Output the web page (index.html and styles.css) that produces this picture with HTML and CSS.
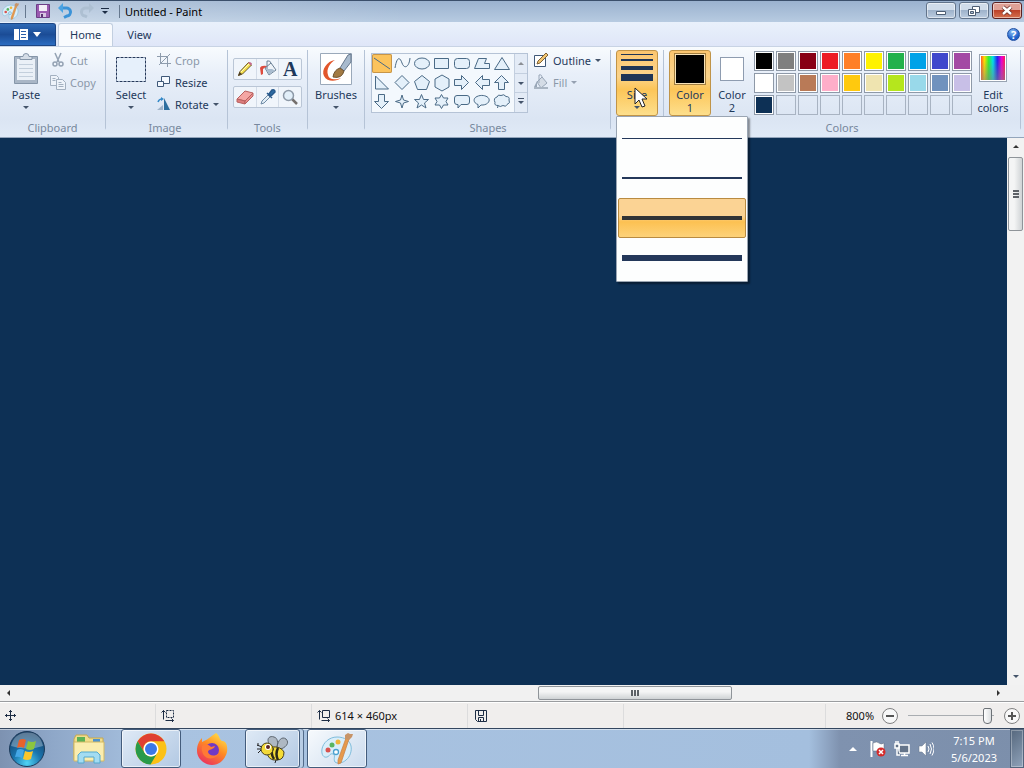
FILE: index.html
```html
<!DOCTYPE html>
<html lang="en">
<head>
    <meta charset="UTF-8">
    <meta name="viewport" content="width=device-width, initial-scale=1.0">
    <title>Untitled - Paint</title>
    <link rel="stylesheet" href="styles.css">
</head>
<body>
    <!-- Shared icon paths -->
    <svg class="defs" width="0" height="0" aria-hidden="true">
        <defs>
            <symbol id="palette" viewBox="0 0 32 32">
                <path d="M16 4C8 4 2 10 1 16c-1 6 2 9 5 8 3-1 3-4 6-3 3 1 0 5 2 8 2 2 8 1 11-2 4-3 6-9 5-14C29 8 24 4 16 4z" fill="#d9eefa" stroke="#7fbcdb"/>
                <circle cx="7" cy="17" r="2.5" fill="#d9534f"/>
                <circle cx="11" cy="12" r="2.5" fill="#57b560"/>
                <circle cx="17" cy="9" r="2.5" fill="#f0b53a"/>
                <circle cx="15" cy="19" r="2.5" fill="#fff" stroke="#4aa0cf" stroke-width="1.3"/>
                <path d="M28 6l-8 24-3 1 0-4 8-22z" fill="#e69a4c" stroke="#c67f45" stroke-width=".7"/>
                <path d="M24 2l3-2 2 1 3 0-1 3-3 3-4-1z" fill="#c79468"/>
            </symbol>
            <symbol id="pencil" viewBox="0 0 16 16">
                <path d="M1.500 14.500l1.500-4 8.500-9 3 2.500-9 9z" fill="#f5e04d" stroke="#6b5a2a"/>
                <path d="M11 2l3 2.500 1-1.500c0-1-1.500-2-2.500-2z" fill="#c46b8d"/>
                <path d="M1 15l1.500-4 2.500 2z" fill="#4b3b23"/>
                <path d="M4 11l8-8" stroke="#fffbc0"/>
            </symbol>
            <symbol id="bucket" viewBox="0 0 18 18">
                <path d="M6 8l6-5 5 7-7 5z" fill="#eef3f8" stroke="#6a7f94"/>
                <path d="M7 9l6 0 3 1.500-6 4z" fill="#a9bccf"/>
                <path d="M8 1v8M8 1q3-1 4 2" fill="none" stroke="#6a7f94"/>
            </symbol>
            <symbol id="resize-mark" viewBox="0 0 14 13">
                <path d="M2.500 10.500v-9M.5 3.500l2-2 2 2M4.500 11.500h8M10.500 9.500l2 2-2 2" fill="none" stroke="#1c2c44"/>
            </symbol>
        </defs>
    </svg>

    <!-- Title bar -->
    <header class="titlebar">
        <div class="quick-access">
            <svg class="app-icon" width="17" height="17"><use href="#palette"/></svg>
            <span class="rule"></span>
            <button type="button" aria-label="Save">
                <svg width="16" height="16" viewBox="0 0 16 16"><path d="M1.500 1.500h13v13h-13z" fill="#9a5ab0" stroke="#6d3f87"/><path d="M4 2h8v6H4z" fill="#f3eef8"/><path d="M5 10h6v4H5z" fill="#d7c6e2"/><path d="M6 11h2v3H6z" fill="#5a3474"/></svg>
            </button>
            <button type="button" aria-label="Undo">
                <svg width="16" height="16" viewBox="0 0 16 16"><path d="M4 5h5a4 4 0 0 1 1 8l-3 1.500" fill="none" stroke="#3b93d8" stroke-width="3"/><path d="M1 5l5-5v10z" fill="#4ba3e3"/></svg>
            </button>
            <button type="button" aria-label="Redo" disabled>
                <svg width="16" height="16" viewBox="0 0 16 16"><path d="M12 5H7a4 4 0 0 0-1 8l2 1" fill="none" stroke="#adbfd2" stroke-width="3"/><path d="M15 5l-5-5v10z" fill="#adbfd2"/></svg>
            </button>
            <button type="button" aria-label="Customize Quick Access Toolbar">
                <svg width="8" height="8" viewBox="0 0 8 8"><path d="M0 1.500h8" stroke="#1c2c44"/><path d="M1 4h6L4 7z" fill="#1c2c44"/></svg>
            </button>
            <span class="rule"></span>
        </div>
        <h1>Untitled - Paint</h1>
        <div class="window-buttons">
            <button type="button" aria-label="Minimize">
                <svg width="12" height="12" viewBox="0 0 12 12"><path d="M1.500 6.500h9v3h-9z" fill="#fff" stroke="#4c5d73"/></svg>
            </button>
            <button type="button" aria-label="Restore">
                <svg width="12" height="12" viewBox="0 0 12 12"><path d="M4.500 1.500h7v6h-7z" fill="#fff" stroke="#4c5d73"/><path d="M.5 4.500h7v6h-7z" fill="#fff" stroke="#4c5d73"/><path d="M2.500 6.500h3v2h-3z" fill="#a9bcd2" stroke="#4c5d73"/></svg>
            </button>
            <button type="button" class="close" aria-label="Close">
                <svg width="12" height="12" viewBox="0 0 12 12"><path d="M2 2l8 7M10 2L2 9" stroke="#6b2c26" stroke-width="4"/><path d="M2 2l8 7M10 2L2 9" stroke="#fff" stroke-width="2.400"/></svg>
            </button>
        </div>
    </header>

    <!-- Tabs -->
    <nav class="tabs">
        <button type="button" class="file-tab" aria-label="Paint menu">
            <svg width="14" height="11" viewBox="0 0 14 11"><path d="M0 0h14v11H0z" fill="#fff"/><path d="M5.500 0v11" stroke="#2a5ea8"/><path d="M7 2.500h5M7 5.500h5M7 8.500h5" stroke="#2a5ea8"/></svg>
            <svg width="8" height="5" viewBox="0 0 8 5"><path d="M0 0h8L4 5z" fill="#fff"/></svg>
        </button>
        <a href="#home" class="tab active">Home</a>
        <a href="#view" class="tab">View</a>
        <button type="button" class="help" aria-label="Help">?</button>
    </nav>

    <!-- Ribbon -->
    <section class="ribbon" id="home">
        <div class="group clipboard">
            <div class="tools">
                <button type="button" class="big">
                    <svg width="26" height="32" viewBox="0 0 26 32"><path d="M1.500 3.500h23v27h-23z" fill="#a9b6c6" stroke="#8696a9"/><path d="M4 6h18v21H4z" fill="#eaf0f7"/><path d="M6 11.500h14M6 15.500h14M6 19.500h14M6 23.500h14" stroke="#c3cfdc"/><path d="M7 6.500V3.500h3a3 3 0 0 1 6 0h3v3z" fill="#d5dde7" stroke="#8696a9"/></svg>
                    <span>Paste</span>
                    <i class="arrow"></i>
                </button>
                <div class="stack">
                    <button type="button" class="row" disabled>
                        <svg width="16" height="16" viewBox="0 0 16 16" fill="none" stroke="#94a2b3" stroke-width="1.500"><path d="M5 1l4 9M11 1L7 10"/><circle cx="5" cy="12" r="2"/><circle cx="11" cy="12" r="2"/></svg>
                        Cut
                    </button>
                    <button type="button" class="row" disabled>
                        <svg width="16" height="16" viewBox="0 0 16 16" fill="#eef3fa" stroke="#a3b0c0"><path d="M.5 1.500h6l2 2v8h-8z"/><path d="M6.500 5.500h6l3 3v7h-9z"/><path d="M8.500 8.500h3M8.500 10.500h5M8.500 12.500h5M2.500 4.500h3M2.500 6.500h3"/></svg>
                        Copy
                    </button>
                </div>
            </div>
            <h2>Clipboard</h2>
        </div>

        <div class="group image">
            <div class="tools">
                <button type="button" class="big">
                    <svg width="32" height="32" viewBox="0 0 32 32"><path d="M1.500 4.500h29v24h-29z" fill="#e6f0fb" stroke="#26395a" stroke-dasharray="3 1"/></svg>
                    <span>Select</span>
                    <i class="arrow"></i>
                </button>
                <div class="stack">
                    <button type="button" class="row" disabled>
                        <svg width="14" height="14" viewBox="0 0 14 14" fill="none" stroke="#8e9cad"><path d="M3.500 0v10.500H14M0 3.500h10.500V14M2 12L13 1"/></svg>
                        Crop
                    </button>
                    <button type="button" class="row">
                        <svg width="14" height="14" viewBox="0 0 14 14" fill="#f4f9ff" stroke="#3f5878"><path d="M4.500 1.500h8v7h-8z"/><path d="M.5 6.500h6v5h-6z"/></svg>
                        Resize
                    </button>
                    <button type="button" class="row">
                        <svg width="14" height="14" viewBox="0 0 14 14"><path d="M7 1v12h6z" fill="#2e6f9f"/><path d="M6 8v5H0z" fill="#9fb3c8"/><path d="M1 5q1-3 4-3" fill="none" stroke="#3489c8" stroke-width="1.500"/><path d="M4 0l3 2-3 2z" fill="#3489c8"/></svg>
                        Rotate
                        <i class="arrow"></i>
                    </button>
                </div>
            </div>
            <h2>Image</h2>
        </div>

        <div class="group toolbox">
            <div class="tools">
                <div class="tool-row">
                    <button type="button" aria-label="Pencil"><svg width="16" height="16"><use href="#pencil"/></svg></button>
                    <button type="button" aria-label="Fill with color"><svg width="18" height="18" viewBox="0 0 18 18"><use href="#bucket"/><path d="M8 6Q2 5 1 8l1 7 2-1V9z" fill="#dd4b3e"/></svg></button>
                    <button type="button" class="letter" aria-label="Text">A</button>
                </div>
                <div class="tool-row">
                    <button type="button" aria-label="Eraser"><svg width="18" height="16" viewBox="0 0 18 16"><path d="M1 10l8-8 8 2-8 8z" fill="#f4a6a4" stroke="#b8605f"/><path d="M1 10l8 2v3l-8-2z" fill="#dd7d7c" stroke="#b8605f"/><path d="M9 12l8-8v3l-8 8z" fill="#e88d8b" stroke="#b8605f"/></svg></button>
                    <button type="button" aria-label="Color picker"><svg width="16" height="16" viewBox="0 0 16 16"><path d="M1 15l1-3 6-6 2 2-6 6z" fill="#e1edf6" stroke="#6f8ba5"/><path d="M7 4l5 5M9 5l3-4q3-1 3 2l-4 4z" fill="#2d6ca4" stroke="#27598c" stroke-width="1.500"/></svg></button>
                    <button type="button" aria-label="Magnifier"><svg width="16" height="16" viewBox="0 0 16 16"><path d="M10 10l5 5" stroke="#75706d" stroke-width="2.500"/><circle cx="6.500" cy="6.500" r="5" fill="#e2eff9" stroke="#8d99a7" stroke-width="1.500"/></svg></button>
                </div>
            </div>
            <h2>Tools</h2>
        </div>

        <div class="group brushes">
            <div class="tools">
                <button type="button" class="big">
                    <svg width="32" height="32" viewBox="0 0 32 32"><path d="M.5.5h31v31H.5z" fill="#fff" stroke="#9aa9ba"/><path d="M15 7C7 8 1 17 4 23c3 6 12 6 17 2-5 2-12 2-13-3C6 16 10 10 15 7z" fill="#e2562b"/><path d="M20 15L28 2l3-1v8l-7 9z" fill="#a9bbce" stroke="#66788d"/><path d="M13 24q1-7 7-9l4 3q-2 8-11 6z" fill="#a27a43" stroke="#6e5330"/></svg>
                    <span>Brushes</span>
                    <i class="arrow"></i>
                </button>
            </div>
        </div>

        <div class="group shapes">
            <div class="tools">
                <div class="gallery">
                    <div class="shape-grid">
                        <button type="button" class="selected" aria-label="Line"><svg viewBox="0 0 20 19"><path d="M2 4l16 11"/></svg></button>
                        <button type="button" aria-label="Curve"><svg viewBox="0 0 20 19"><path d="M3 14C5 2 8 3 10 9s7 5 8-5"/></svg></button>
                        <button type="button" aria-label="Oval"><svg viewBox="0 0 20 19"><ellipse cx="10" cy="9.500" rx="7.500" ry="5.500"/></svg></button>
                        <button type="button" aria-label="Rectangle"><svg viewBox="0 0 20 19"><path d="M2.500 4.500h14v10h-14z"/></svg></button>
                        <button type="button" aria-label="Rounded rectangle"><svg viewBox="0 0 20 19"><rect x="2.500" y="4.500" width="15" height="10" rx="3"/></svg></button>
                        <button type="button" aria-label="Polygon"><svg viewBox="0 0 20 19"><path d="M2.500 14.500l4-10h8l-2 5h5v5z"/></svg></button>
                        <button type="button" aria-label="Triangle"><svg viewBox="0 0 20 19"><path d="M10 3.500l7.500 12h-15z"/></svg></button>
                        <button type="button" aria-label="Right triangle"><svg viewBox="0 0 20 19"><path d="M3.500 3v13h13z"/></svg></button>
                        <button type="button" aria-label="Diamond"><svg viewBox="0 0 20 19"><path d="M10 2.500l7 7-7 7-7-7z"/></svg></button>
                        <button type="button" aria-label="Pentagon"><svg viewBox="0 0 20 19"><path d="M10 2.500l7.500 6-3 8h-9l-3-8z"/></svg></button>
                        <button type="button" aria-label="Hexagon"><svg viewBox="0 0 20 19"><path d="M10 2l7 4v8l-7 4-7-4V6z"/></svg></button>
                        <button type="button" aria-label="Right arrow"><svg viewBox="0 0 20 19"><path d="M2.500 6.500h7v-4l7 7-7 7v-4h-7z"/></svg></button>
                        <button type="button" aria-label="Left arrow"><svg viewBox="0 0 20 19"><path d="M17.500 6.500h-7v-4l-7 7 7 7v-4h7z"/></svg></button>
                        <button type="button" aria-label="Up arrow"><svg viewBox="0 0 20 19"><path d="M6.500 16.500v-7h-4l7-7 7 7h-4v7z"/></svg></button>
                        <button type="button" aria-label="Down arrow"><svg viewBox="0 0 20 19"><path d="M6.500 2.500v7h-4l7 7 7-7h-4v-7z"/></svg></button>
                        <button type="button" aria-label="Four-point star"><svg viewBox="0 0 20 19"><path d="M10 3l1.500 5 5 1.500-5 1.500-1.500 5L8.500 11l-5-1.500 5-1.500z"/></svg></button>
                        <button type="button" aria-label="Five-point star"><svg viewBox="0 0 20 19"><path d="M9.500 2.500l2 5h5l-4 3.500 1.500 5-4.500-3L5 16l1.500-5-4-3.500h5z"/></svg></button>
                        <button type="button" aria-label="Six-point star"><svg viewBox="0 0 20 19"><path d="M9.500 2.500l2 3.500h4.500l-2 3.500 2 3.500h-4.500l-2 3.500-2-3.500H3l2-3.500L3 6h4.500z"/></svg></button>
                        <button type="button" aria-label="Rounded callout"><svg viewBox="0 0 20 19"><path d="M5 3.500h10q2.500 0 2.500 2.500v4q0 2.500-2.500 2.500H9L6 16v-3.500H5q-2.500 0-2.500-2.500V6q0-2.500 2.500-2.500z"/></svg></button>
                        <button type="button" aria-label="Oval callout"><svg viewBox="0 0 20 19"><path d="M6 16l0-3.500C1 11 1 6 5 4.500c4-2 9-1 11 1 3 3 0 7-5 7.500H9z"/></svg></button>
                        <button type="button" aria-label="Cloud callout"><svg viewBox="0 0 20 19"><path d="M6 14l-.5 2M5 5q1-3 4-1.500 3-2 5 1 4 0 3 3.500 2 3-2 4.500-1 3-4 1-3 2-5 0-4 0-3-3Q1 6 5 5z"/></svg></button>
                    </div>
                    <div class="gallery-nav">
                        <button type="button" aria-label="Scroll up" disabled><i class="arrow up"></i></button>
                        <button type="button" aria-label="Scroll down"><i class="arrow"></i></button>
                        <button type="button" class="more" aria-label="More shapes"><i class="arrow"></i></button>
                    </div>
                </div>
                <div class="stack">
                    <button type="button" class="row">
                        <svg width="16" height="16" viewBox="0 0 16 16"><path d="M1.500 3.500h11v11h-11z" fill="#fff" stroke="#3f5878"/><path d="M4 12l1-3 8-8 2 2-8 8z" fill="#f0c471" stroke="#7d6035"/></svg>
                        Outline
                        <i class="arrow"></i>
                    </button>
                    <button type="button" class="row" disabled>
                        <svg width="16" height="16" viewBox="0 0 16 16"><path d="M4 8l5-5 5 6-6 5z" fill="#d4dce6" stroke="#98a6b7"/><path d="M6 9V1q3-1 3 3" fill="none" stroke="#98a6b7"/><path d="M4 7l-3 6h3z" fill="#98a6b7"/><path d="M1 13h14v2H1z" fill="#a9b5c3"/></svg>
                        Fill
                        <i class="arrow"></i>
                    </button>
                </div>
            </div>
            <h2>Shapes</h2>
        </div>

        <div class="group size">
            <div class="tools">
                <button type="button" class="big pressed" aria-haspopup="true" aria-expanded="true">
                    <svg width="32" height="32" viewBox="0 0 32 32"><path d="M0 1h32v1H0zM0 6h32v2H0zM0 13h32v4H0zM0 21h32v7H0z" fill="#1f3556"/></svg>
                    <span>Size</span>
                    <i class="arrow"></i>
                </button>
                <svg class="cursor" width="13" height="21" viewBox="0 0 13 21"><path d="M1 1v16l4-4 3 7 3-1-3-7h5z" fill="#fff" stroke="#222"/></svg>
                <div class="size-menu" role="menu">
                    <button type="button" role="menuitem" class="px1" aria-label="1px"><i></i></button>
                    <button type="button" role="menuitem" class="px3" aria-label="3px"><i></i></button>
                    <button type="button" role="menuitem" class="px5 hover" aria-label="5px"><i></i></button>
                    <button type="button" role="menuitem" class="px8" aria-label="8px"><i></i></button>
                </div>
            </div>
        </div>

        <div class="group colors">
            <div class="tools">
                <button type="button" class="big pressed"><b class="current one"></b><span>Color<br>1</span></button>
                <button type="button" class="big"><b class="current two"></b><span>Color<br>2</span></button>
                <div class="swatches">
                    <button type="button" class="black" aria-label="Black"></button>
                    <button type="button" class="gray" aria-label="Gray-50%"></button>
                    <button type="button" class="dark-red" aria-label="Dark red"></button>
                    <button type="button" class="red" aria-label="Red"></button>
                    <button type="button" class="orange" aria-label="Orange"></button>
                    <button type="button" class="yellow" aria-label="Yellow"></button>
                    <button type="button" class="green" aria-label="Green"></button>
                    <button type="button" class="turquoise" aria-label="Turquoise"></button>
                    <button type="button" class="indigo" aria-label="Indigo"></button>
                    <button type="button" class="purple" aria-label="Purple"></button>
                    <button type="button" class="white" aria-label="White"></button>
                    <button type="button" class="light-gray" aria-label="Gray-25%"></button>
                    <button type="button" class="brown" aria-label="Brown"></button>
                    <button type="button" class="rose" aria-label="Rose"></button>
                    <button type="button" class="gold" aria-label="Gold"></button>
                    <button type="button" class="light-yellow" aria-label="Light yellow"></button>
                    <button type="button" class="lime" aria-label="Lime"></button>
                    <button type="button" class="light-turquoise" aria-label="Light turquoise"></button>
                    <button type="button" class="blue-gray" aria-label="Blue-gray"></button>
                    <button type="button" class="lavender" aria-label="Lavender"></button>
                    <button type="button" class="navy" aria-label="Custom color"></button>
                    <button type="button" class="empty" aria-label="Empty"></button>
                    <button type="button" class="empty" aria-label="Empty"></button>
                    <button type="button" class="empty" aria-label="Empty"></button>
                    <button type="button" class="empty" aria-label="Empty"></button>
                    <button type="button" class="empty" aria-label="Empty"></button>
                    <button type="button" class="empty" aria-label="Empty"></button>
                    <button type="button" class="empty" aria-label="Empty"></button>
                    <button type="button" class="empty" aria-label="Empty"></button>
                    <button type="button" class="empty" aria-label="Empty"></button>
                </div>
                <button type="button" class="big edit"><b class="spectrum"></b><span>Edit<br>colors</span></button>
            </div>
            <h2>Colors</h2>
        </div>
    </section>

    <!-- Drawing area -->
    <main class="workspace">
        <div class="canvas"></div>
        <div class="vscroll">
            <button type="button" aria-label="Scroll up"><i class="arrow up"></i></button>
            <div class="vtrack"><div class="thumb"><i></i></div></div>
            <button type="button" aria-label="Scroll down"><i class="arrow"></i></button>
        </div>
    </main>
    <div class="hscroll">
        <button type="button" aria-label="Scroll left"><i class="arrow left"></i></button>
        <div class="htrack"><div class="thumb"><i></i></div></div>
        <button type="button" aria-label="Scroll right"><i class="arrow right"></i></button>
    </div>

    <!-- Status bar -->
    <footer class="statusbar">
        <div class="cell"><svg width="11" height="11" viewBox="0 0 11 11" fill="none" stroke="#1c2c44"><path d="M5.500 0v11M0 5.500h11M4 2l1.500-1.500L7 2M4 9l1.500 1.500L7 9M2 4L.5 5.500 2 7M9 4l1.500 1.500L9 7"/></svg></div>
        <div class="cell"><svg width="14" height="14" viewBox="0 0 14 14"><use href="#resize-mark" width="14" height="13"/><path d="M5.500 1.500h7v7h-7z" fill="none" stroke="#1c2c44" stroke-dasharray="2 1"/></svg></div>
        <div class="cell"><svg width="14" height="14" viewBox="0 0 14 14"><use href="#resize-mark" width="14" height="13"/><path d="M5.500 1.500h7v7h-7z" fill="none" stroke="#1c2c44"/></svg><span>614 × 460px</span></div>
        <div class="cell disk"><svg width="12" height="12" viewBox="0 0 12 12" fill="none" stroke="#1c2c44"><path d="M.5.5h11v11h-9l-2-2zM3.500.5v5h5v-5M3.500 11.500v-4h5v4M5.500 9v2"/></svg></div>
        <div class="cell rest"></div>
        <div class="zoom">
            <label for="zoom">800%</label>
            <button type="button" aria-label="Zoom out"><svg width="16" height="16" viewBox="0 0 16 16"><circle cx="8" cy="8" r="7.500" fill="#f8f8f8" stroke="#808080"/><path d="M4 8h8" stroke="#555" stroke-width="2"/></svg></button>
            <input type="range" id="zoom" min="0" max="100" value="98">
            <button type="button" aria-label="Zoom in"><svg width="16" height="16" viewBox="0 0 16 16"><circle cx="8" cy="8" r="7.500" fill="#f8f8f8" stroke="#808080"/><path d="M4 8h8M8 4v8" stroke="#555" stroke-width="2"/></svg></button>
        </div>
    </footer>

    <!-- Taskbar -->
    <div class="taskbar">
        <button type="button" class="start" aria-label="Start">
            <svg width="38" height="38" viewBox="0 0 38 38">
                <defs>
                    <radialGradient id="orb" cx=".5" cy=".9" r=".9"><stop offset="0" stop-color="#4fd4f5"/><stop offset=".45" stop-color="#1a74ad"/><stop offset="1" stop-color="#173c63"/></radialGradient>
                </defs>
                <circle cx="19" cy="19" r="17.500" fill="url(#orb)" stroke="#1c3a5a"/>
                <path d="M3 16Q6 3 19 2.500T35 16Q19 21 3 16z" fill="#fff" opacity=".3"/>
                <path d="M11 10q4-2 7 0l-2 8q-4-2-7 0z" fill="#e8622c"/>
                <path d="M20 11q4 2 8 0l-2 8q-4 2-8 0z" fill="#8cc63e"/>
                <path d="M9 20q3-2 7 0l-2 8q-4-2-7-1z" fill="#45a7e6"/>
                <path d="M17 21q4 2 8 0l-2 8q-4 2-8 0z" fill="#fbc62c"/>
            </svg>
        </button>
        <button type="button" class="task" aria-label="Windows Explorer">
            <svg width="32" height="30" viewBox="0 0 32 30"><path d="M1 5l2-4h11l2 3h14v22H1z" fill="#f0dc8b" stroke="#c4a850"/><path d="M4 3h8v5H4z" fill="#5bb157"/><path d="M20 5h7v3h-7z" fill="#4e93cf"/><path d="M1 8h30v19H1z" fill="#faedb0" stroke="#d3b962"/><path d="M5 29v-8l3-3h16l3 3v8h-6v-6H11v6z" fill="#a3dcf2" stroke="#55a9ce"/></svg>
        </button>
        <button type="button" class="task open" aria-label="Google Chrome">
            <svg width="32" height="32" viewBox="0 0 32 32"><circle cx="16" cy="16" r="15.500" fill="#fbc116"/><path d="M2.600 8.300A15.500 15.500 0 0 1 29.400 8.300H16a7.500 7.500 0 0 0-6.500 11.500z" fill="#df4032"/><path d="M2.600 8.300A15.500 15.500 0 0 0 15.500 31.500L22.500 19.800A7.500 7.500 0 0 1 9.500 19.800z" fill="#289a4a"/><circle cx="16" cy="16" r="7.500" fill="#fff"/><circle cx="16" cy="16" r="6" fill="#3b78e7"/></svg>
        </button>
        <button type="button" class="task" aria-label="Firefox">
            <svg width="32" height="32" viewBox="0 0 32 32">
                <defs>
                    <linearGradient id="fox" x1=".8" y1="0" x2=".2" y2="1"><stop offset="0" stop-color="#ffe44c"/><stop offset=".45" stop-color="#ff8a23"/><stop offset="1" stop-color="#ea2b62"/></linearGradient>
                </defs>
                <path d="M20 0c4 3 3 6 6 8 4-1 6 5 5 11-2 8-8 13-15 13S1 26 1 18C1 12 3 8 6 5v4l4-2c1 0 4-3 10-7z" fill="url(#fox)"/>
                <circle cx="16" cy="17" r="7" fill="#7139c4"/>
                <path d="M6 13c4-3 7-1 9 1l4-1c-1 4-7 3-7 6 1 4 7 5 11 1-2 6-12 8-16 1q-2-4-1-8z" fill="#ff7a35"/>
            </svg>
        </button>
        <button type="button" class="task open stacked" aria-label="Bee">
            <svg width="34" height="28" viewBox="0 0 34 28"><path d="M15 11C9 5 13 0 18 2c4 1 4 6 3 10 1-7 5-11 9-8 4 4 0 9-8 11z" fill="#aeb8c3" stroke="#5d6670"/><path d="M15 12q10-1 13 5 0 8-7 8-9 1-10-8z" fill="#f5dc36" stroke="#4b421c"/><path d="M17 13q-3 5 1 11M22 13q-3 6 0 12" fill="none" stroke="#2d2818" stroke-width="2.500"/><circle cx="11" cy="14" r="6" fill="#f3d938" stroke="#4b421c"/><circle cx="12" cy="12" r="3" fill="#fff"/><circle cx="12" cy="12" r="2" fill="#5f2520"/><path d="M6 12L1 10m4 4H1m1-6v3m3 4l-3 3M20 25l-1 3" stroke="#222"/></svg>
        </button>
        <button type="button" class="task open current-app" aria-label="Paint">
            <svg width="32" height="32"><use href="#palette"/></svg>
        </button>
        <div class="tray">
            <button type="button" aria-label="Show hidden icons"><svg width="8" height="5" viewBox="0 0 8 5"><path d="M0 5l4-4 4 4z" fill="#fff"/></svg></button>
            <button type="button" aria-label="Action Center"><svg width="16" height="16" viewBox="0 0 16 16"><path d="M1.500 0v16" stroke="#fff" stroke-width="2"/><path d="M3 2q4-2 6 0t5 0v8H3z" fill="#fff" stroke="#5f6b7c" stroke-width=".5"/><circle cx="11" cy="11" r="4.500" fill="#d52b2b"/><path d="M9 9l4 4M13 9l-4 4" stroke="#fff" stroke-width="1.500"/></svg></button>
            <button type="button" aria-label="Network"><svg width="16" height="16" viewBox="0 0 16 16" fill="#64748a" stroke="#fff" stroke-width="1.500"><path d="M5 4h10v8H5z"/><path d="M7 14.500h7M10.500 12v3"/><path d="M1 3h4v4H1zM2 0v3M4 0v3M3 7v7h3"/></svg></button>
            <button type="button" aria-label="Volume"><svg width="16" height="16" viewBox="0 0 16 16"><path d="M1 5h3l4-4v14l-4-4H1z" fill="#fff" stroke="#66748a" stroke-width=".5"/><path d="M10 5q2 3 0 6M12 3q3 5 0 10M14 1.500q4 6 0 13" fill="none" stroke="#fff"/></svg></button>
            <div class="clock"><time>7:15 PM</time><time>5/6/2023</time></div>
            <button type="button" class="show-desktop" aria-label="Show desktop"></button>
        </div>
    </div>
</body>
</html>
```
FILE: styles.css
```css
/* Global Styles */
* {
    box-sizing: border-box;
}

body {
    margin: 0;
    height: 100vh;
    display: flex;
    flex-direction: column;
    overflow: hidden;
    background: #dfe8f5;
    color: #1e395b;
    font-family: "Noto Sans", "Open Sans", sans-serif;
    font-size: 11px;
    line-height: 13px;
}

button {
    margin: 0;
    padding: 0;
    border: none;
    background: none;
    color: inherit;
    font: inherit;
    display: flex;
    align-items: center;
    justify-content: center;
}

svg {
    display: block;
    flex: none;
}

h1, h2 {
    margin: 0;
    font-size: 11px;
    font-weight: normal;
}

.defs {
    position: absolute;
}

/* Small triangles */
.arrow {
    width: 0;
    height: 0;
    border: 3px solid transparent;
    border-top-color: #44546a;
    border-bottom-width: 0;
}

.arrow.up {
    border-width: 0 3px 3px;
    border-bottom-color: #333;
}

.arrow.left {
    border-width: 3px 3px 3px 0;
    border-color: transparent #333;
}

.arrow.right {
    border-width: 3px 0 3px 3px;
    border-color: transparent #333;
}

/* Title bar */
.titlebar {
    flex: none;
    height: 22px;
    display: flex;
    align-items: center;
    padding-bottom: 1px;
    border-top: 1px solid #3b4f6b;
    background: linear-gradient(to right, rgba(255, 255, 255, 0.3), transparent 40%), linear-gradient(#9bb2cf, #b7cbe1);
}

.titlebar h1 {
    flex: 1;
    padding-left: 5px;
    color: #000;
}

.quick-access {
    display: flex;
    align-items: center;
    gap: 6px;
    padding-left: 2px;
}

.rule {
    width: 1px;
    height: 13px;
    margin-right: 3px;
    background: #66788e;
}

.rule:last-child {
    margin: 0 0 0 4px;
}

.window-buttons {
    align-self: flex-start;
    display: flex;
    gap: 3px;
    padding: 1px 2px 0 0;
}

.window-buttons button {
    width: 30px;
    height: 17px;
    border: 1px solid #62748b;
    border-radius: 3px;
    background: linear-gradient(#d0dcea 45%, #9fb3cb 50%, #bccde0);
    box-shadow: inset 0 0 0 1px rgba(255, 255, 255, 0.5);
}

.window-buttons .close {
    border-color: #5b2020;
    background: linear-gradient(#e0a196 45%, #bd4229 50%, #d5714f);
}

/* Tabs */
.tabs {
    flex: none;
    height: 24px;
    display: flex;
    align-items: flex-end;
    background: linear-gradient(#e9f1fb, #dfe6f8);
}

.file-tab {
    width: 56px;
    height: 23px;
    gap: 5px;
    border: 1px solid #1c4685;
    border-left: 0;
    border-radius: 0 3px 0 0;
    background: linear-gradient(#2f6ab5, #1b4c96 50%, #2b6cc0);
}

.tab {
    height: 23px;
    padding: 4px 11px;
    border: 1px solid transparent;
    color: #1e395b;
    text-decoration: none;
}

.tab.active {
    margin-left: 2px;
    margin-right: 2px;
    border-color: #c2cfe0;
    border-bottom: 0;
    border-radius: 3px 3px 0 0;
    background: #f9fbfe;
}

.help {
    align-self: center;
    width: 13px;
    height: 13px;
    margin: 0 4px 0 auto;
    border: 1px solid #1e4fa3;
    border-radius: 50%;
    background: radial-gradient(circle at 40% 25%, #8cc0f5, #1f5fc9 65%);
    color: #fff;
    font-weight: bold;
    line-height: 11px;
}

/* Ribbon */
.ribbon {
    flex: none;
    height: 92px;
    display: flex;
    padding-top: 3px;
    border-top: 1px solid #c8d3e4;
    border-bottom: 1px solid #93a5bb;
    background: linear-gradient(#f8fbfe, #e8eff9 30%, #dbe5f3 80%, #e0eaf7);
}

.group {
    position: relative;
    flex: none;
    height: 84px;
    display: flex;
    flex-direction: column;
    justify-content: space-between;
    border-right: 1px solid;
    border-image: linear-gradient(#b5c3d6 92%, transparent 94%) 1;
}

.group h2 {
    padding-right: 5px;
    color: #77879d;
    text-align: center;
}

.tools {
    display: flex;
}

.clipboard {
    width: 106px;
    padding-left: 5px;
}

.image {
    width: 122px;
    padding-left: 2px;
}

.toolbox {
    width: 80px;
    padding-left: 5px;
}

.brushes {
    width: 57px;
    padding-left: 7px;
}

.shapes {
    width: 246px;
    padding-left: 6px;
}

.size {
    width: 53px;
    padding-left: 5px;
}

.colors {
    width: 357px;
    padding-left: 5px;
}

.big {
    width: 42px;
    height: 66px;
    flex-direction: column;
    justify-content: flex-start;
    padding-top: 2px;
    border: 1px solid transparent;
    border-radius: 3px;
}

.big svg {
    margin-bottom: 3px;
}

.big .arrow {
    margin-top: 5px;
}

.pressed {
    border-color: #c09448;
    background: linear-gradient(#fcc66f, #fbd48c 40%, #fcc558 60%, #fddf8c);
}

.image .big {
    width: 46px;
}

.stack {
    display: flex;
    flex-direction: column;
    align-items: flex-start;
    padding-left: 3px;
}

.shapes .stack {
    padding-left: 5px;
}

.row {
    height: 22px;
    gap: 4px;
    padding-bottom: 2px;
}

.row:disabled {
    color: #8b98a9;
}

.row:disabled .arrow,
.gallery-nav :disabled .arrow {
    opacity: 0.5;
}

/* Drawing tools */
.toolbox .tools {
    flex-direction: column;
    gap: 6px;
    padding-top: 8px;
}

.tool-row {
    width: 69px;
    display: flex;
    border: 1px solid #bac6d6;
    border-radius: 2px;
    background: #f0f5fb;
}

.tool-row button {
    flex: 1;
    height: 20px;
}

.tool-row button + button {
    border-left: 1px solid #d3dce8;
}

.letter {
    font-family: "Liberation Serif", serif;
    font-size: 20px;
    font-weight: bold;
}

/* Shape gallery */
.gallery {
    height: 60px;
    display: flex;
    margin-top: 3px;
    border: 1px solid #b5c3d6;
    background: #f3f8fd;
}

.shape-grid {
    display: grid;
    grid-template-columns: repeat(7, 20px);
    grid-auto-rows: 19px;
    padding-right: 2px;
}

.shape-grid svg {
    width: 20px;
    height: 19px;
    fill: #e4f0fa;
    stroke: #4a6a86;
}

.shape-grid button:nth-child(-n+2) svg {
    fill: none;
}

.shape-grid .selected {
    border-radius: 2px;
    background: #fbc35c;
    box-shadow: inset 0 0 0 1px #c79548;
}

.gallery-nav {
    width: 13px;
    display: flex;
    flex-direction: column;
    border-left: 1px solid #c3cfdf;
    background: #e3ebf6;
}

.gallery-nav button {
    flex: 1;
}

.gallery-nav button + button {
    border-top: 1px solid #c3cfdf;
}

.gallery-nav .more .arrow {
    position: relative;
}

.gallery-nav .more .arrow::before {
    content: "";
    position: absolute;
    top: -6px;
    left: -3px;
    width: 6px;
    height: 1px;
    background: #44546a;
}

/* Size menu */
.cursor {
    position: absolute;
    z-index: 3;
    top: 37px;
    left: 23px;
}

.size-menu {
    position: absolute;
    z-index: 2;
    top: 66px;
    left: 5px;
    width: 132px;
    padding: 1px 1px 3px;
    border: 1px solid #9aa5b3;
    border-radius: 1px;
    background: #fdfefe;
    box-shadow: 2px 2px 2px rgba(0, 0, 0, 0.4);
}

.size-menu button {
    width: 100%;
    height: 40px;
    padding: 0 3px;
    border: 1px solid transparent;
    border-radius: 2px;
}

.size-menu i {
    width: 100%;
    height: 1px;
    background: #24385a;
}

.size-menu .px3 i {
    height: 2px;
}

.size-menu .px5 i {
    height: 4px;
    background: #303336;
}

.size-menu .px8 i {
    height: 6px;
}

.size-menu .hover {
    border-color: #b98b41;
    background: linear-gradient(#fbd394 45%, #fcc152 60%, #fdd27a);
}

/* Colors */
.current {
    width: 32px;
    height: 32px;
    margin-bottom: 3px;
    border: 1px solid #a17d3e;
    background: #000;
    box-shadow: inset 0 0 0 1px #f8e3b8;
}

.current.two {
    width: 24px;
    height: 24px;
    margin: 4px 0 7px;
    border-color: #8e9cb0;
    background: #fff;
    box-shadow: none;
}

.swatches {
    display: grid;
    grid-template-columns: repeat(10, 20px);
    grid-auto-rows: 20px;
    gap: 2px;
    margin: 1px 0 0 1px;
}

.swatches button {
    border: 1px solid #8e99a8;
    box-shadow: inset 0 0 0 1px #fff;
}

.swatches .empty {
    border-color: #a8b3c2;
    box-shadow: none;
}

.edit {
    padding-top: 3px;
}

.spectrum {
    width: 28px;
    height: 28px;
    margin-bottom: 6px;
    border: 1px solid #98a3b2;
    background: linear-gradient(transparent 20%, rgba(128, 128, 128, 0.6)), linear-gradient(to right, #f33, #fd0, #3e3, #0de, #22e, #e0c, #f23);
    box-shadow: inset 0 0 0 1px #fff;
}

.black { background: #000; }
.gray { background: #7f7f7f; }
.dark-red { background: #880015; }
.red { background: #ed1c24; }
.orange { background: #ff7f27; }
.yellow { background: #fff200; }
.green { background: #22b14c; }
.turquoise { background: #00a2e8; }
.indigo { background: #3f48cc; }
.purple { background: #a349a4; }
.white { background: #fff; }
.light-gray { background: #c3c3c3; }
.brown { background: #b97a57; }
.rose { background: #ffaec9; }
.gold { background: #ffc90e; }
.light-yellow { background: #efe4b0; }
.lime { background: #b5e61d; }
.light-turquoise { background: #99d9ea; }
.blue-gray { background: #7092be; }
.lavender { background: #c8bfe7; }
.navy { background: #0d3055; }

/* Drawing area */
.workspace {
    flex: 1;
    min-height: 0;
    display: flex;
}

.canvas {
    flex: 1;
    background: #0d3055;
}

.vscroll {
    width: 17px;
    display: flex;
    flex-direction: column;
    background: #f2f2f2;
}

.vscroll button {
    height: 17px;
}

.vtrack {
    flex: 1;
    padding: 2px 1px;
}

.thumb {
    display: flex;
    align-items: center;
    justify-content: center;
    border: 1px solid #8f9499;
    border-radius: 2px;
    background: linear-gradient(#f4f5f5 40%, #cfd3d5);
}

.vtrack .thumb {
    width: 15px;
    height: 14.5%;
    background: linear-gradient(to right, #f4f5f5 40%, #cfd3d5);
}

.thumb i {
    width: 8px;
    height: 6px;
    background: repeating-linear-gradient(to right, #5d6267 0 2px, transparent 2px 3px);
}

.vtrack .thumb i {
    width: 6px;
    height: 8px;
    background: repeating-linear-gradient(#5d6267 0 2px, transparent 2px 3px);
}

.hscroll {
    flex: none;
    height: 17px;
    display: flex;
    padding-right: 17px;
    border-bottom: 1px solid #9a9c9f;
    background: #f1f1f1;
}

.hscroll button {
    width: 17px;
}

.htrack {
    flex: 1;
    display: flex;
    padding: 1px 0;
}

.htrack .thumb {
    width: 20%;
    margin-left: 53.5%;
}

/* Status bar */
.statusbar {
    flex: none;
    height: 26px;
    display: flex;
    align-items: center;
    border-top: 1px solid #fff;
    background: #f0eeed;
    color: #111;
}

.cell {
    flex: none;
    width: 156px;
    height: 24px;
    display: flex;
    align-items: center;
    gap: 4px;
    padding-left: 5px;
    border-right: 1px solid #dcdcdd;
}

.disk {
    padding-left: 7px;
}

.rest {
    flex: 1;
}

.zoom {
    display: flex;
    align-items: center;
    padding: 0 4px 0 20px;
}

.zoom label {
    width: 36px;
}

.zoom input {
    width: 86px;
    height: 18px;
    margin: 0 10px;
    appearance: none;
    background: linear-gradient(#a9adb1, #a9adb1) center / 100% 1px no-repeat;
}

.zoom input::-webkit-slider-thumb {
    appearance: none;
    width: 9px;
    height: 16px;
    border: 1px solid #6d7277;
    border-radius: 2px 2px 4px 4px;
    background: linear-gradient(to right, #fff, #dcdfe1);
}

/* Taskbar */
.taskbar {
    flex: none;
    height: 40px;
    display: flex;
    align-items: stretch;
    border-top: 1px solid #33465f;
    background: linear-gradient(to right, #7d92b1, #8ea7c8 5%, #a9c3e1 15%, #a4bfde 79%, #7f92af 82%, #7c8fab);
    box-shadow: inset 0 1px 0 rgba(255, 255, 255, 0.5);
}

.start {
    width: 53px;
}

.task {
    width: 60px;
    margin-right: 1px;
    border: 1px solid transparent;
    border-radius: 3px;
}

.start + .task {
    margin: 0 2px 0 6px;
}

.open {
    border-color: #435c7c;
    background: linear-gradient(135deg, #dfeaf6, #b3c9e3);
    box-shadow: inset 0 0 0 1px rgba(255, 255, 255, 0.6);
}

.stacked {
    width: 55px;
    margin: 0 7px 0 2px;
    box-shadow: inset 0 0 0 1px rgba(255, 255, 255, 0.6), 3px 0 0 #b8cde5, 4px 0 0 #526b8a;
}

.current-app {
    background: linear-gradient(135deg, #f7fafd, #cbdbee);
}

.tray {
    display: flex;
    align-items: center;
    gap: 8px;
    margin-left: auto;
    color: #fff;
}

.tray button:first-child {
    margin-right: 5px;
}

.clock {
    width: 64px;
    margin-right: 4px;
    line-height: 17px;
    text-align: center;
}

.clock time {
    display: block;
}

.tray .show-desktop {
    width: 14px;
    height: 100%;
    margin-left: -8px;
    border: 1px solid #53657d;
    background: linear-gradient(135deg, #56687e, #8fa2b9);
    box-shadow: inset 0 0 0 1px rgba(255, 255, 255, 0.3);
}
```
